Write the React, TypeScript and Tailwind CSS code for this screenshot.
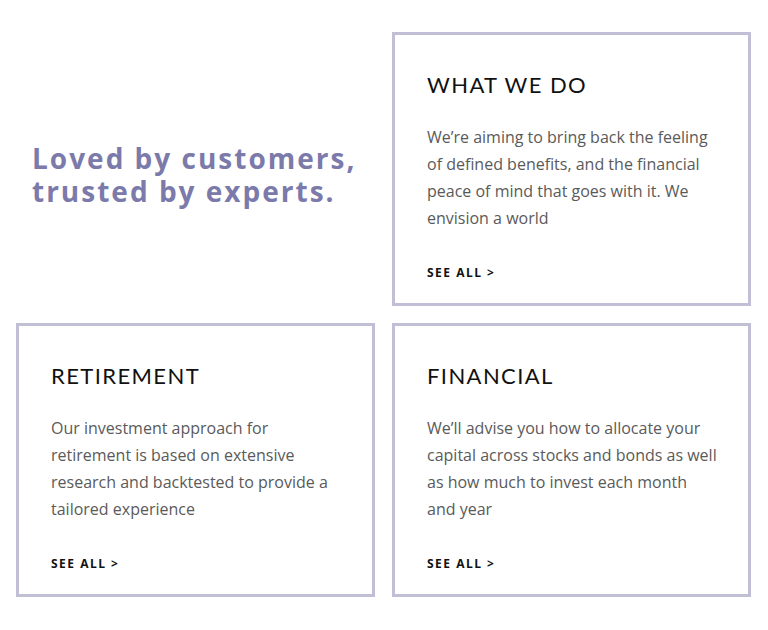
const cards = [
  {
    title: 'WHAT WE DO',
    body: 'We’re aiming to bring back the feeling of defined benefits, and the financial peace of mind that goes with it. We envision a world',
  },
  {
    title: 'RETIREMENT',
    body: 'Our investment approach for retirement is based on extensive research and backtested to provide a tailored experience',
  },
  {
    title: 'FINANCIAL',
    body: 'We’ll advise you how to allocate your capital across stocks and bonds as well as how much to invest each month and year',
  },
]

type CardProps = { title: string; body: string }

const Card = ({ title, body }: CardProps) => {
  return (
    <div className="flex h-[274px] flex-col border-[3px] border-[#c0bfd6] bg-white pl-[32px] pr-[20px] pt-[35px]">
      <h3 className="font-['Lato',sans-serif] text-[22px] leading-[30px] tracking-[1.4px] text-[#111]">{title}</h3>
      <p className="mt-[24px] w-[291px] font-['Open_Sans',sans-serif] text-[16px] leading-[27px] text-[#5a5a5a]">{body}</p>
      <div className="mt-auto mb-[21px] font-['Open_Sans',sans-serif] text-[12px] font-bold leading-[18px] tracking-[1.5px] text-[#111]">
        SEE ALL &gt;
      </div>
    </div>
  )
}

export default function App() {
  return (
    <div className="min-h-[630px] w-[768px] bg-white pt-8 pl-4">
      <div className="grid grid-cols-[359px_359px] gap-[17px]">
        <div className="flex items-center pl-[16px] pt-[12px]">
          <h2 className="flex flex-col font-['Open_Sans',sans-serif] text-[28px] font-bold leading-[33px] tracking-[2px] text-[#7b7aaa]">
            <span className="block h-[33px]">Loved by customers,</span>
            <span className="block h-[33px]">trusted by experts.</span>
          </h2>
        </div>
        {cards.map((c) => (
          <Card key={c.title} title={c.title} body={c.body} />
        ))}
      </div>
    </div>
  )
}
